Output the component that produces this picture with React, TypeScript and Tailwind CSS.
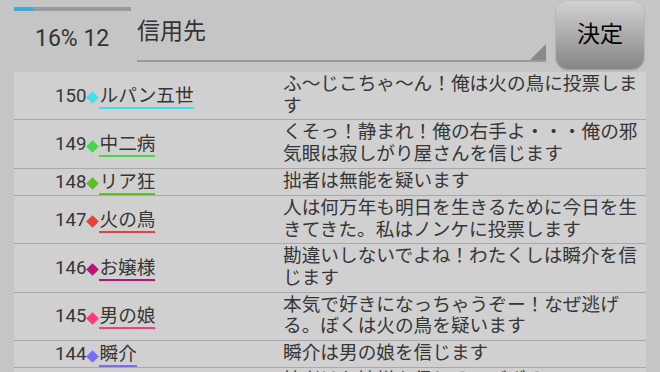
import React from 'react';

interface Post {
  no: number;
  name: string;
  color: string;
  text: string;
}

const posts: Post[] = [
  { no: 150, name: 'ルパン五世', color: '#3fe0ee', text: 'ふ〜じこちゃ〜ん！俺は火の鳥に投票します' },
  { no: 149, name: '中二病', color: '#47d84a', text: 'くそっ！静まれ！俺の右手よ・・・俺の邪気眼は寂しがり屋さんを信じます' },
  { no: 148, name: 'リア狂', color: '#5ec21e', text: '拙者は無能を疑います' },
  { no: 147, name: '火の鳥', color: '#e8413a', text: '人は何万年も明日を生きるために今日を生きてきた。私はノンケに投票します' },
  { no: 146, name: 'お嬢様', color: '#c0107a', text: '勘違いしないでよね！わたくしは瞬介を信じます' },
  { no: 145, name: '男の娘', color: '#ff3a7a', text: '本気で好きになっちゃうぞー！なぜ逃げる。ぼくは火の鳥を疑います' },
  { no: 144, name: '瞬介', color: '#7a6cf5', text: '瞬介は男の娘を信じます' },
  { no: 143, name: 'ノンケ', color: '#e0a020', text: '拙者はお嬢様を信じるでござる\n寂しがり屋さんを疑います' },
];

const Row: React.FC<{ post: Post }> = ({ post }) => (
  <div className="flex border-b border-[#a9a9a9]">
    <div className="w-[269px] flex items-center pl-[41px] text-[#363636]">
      <span className="leading-[22px]">{post.no}</span>
      <span
        className="mx-[2px] mt-[4px] w-[9px] h-[9px] rotate-45 shrink-0"
        style={{ backgroundColor: post.color }}
      />
      <span
        className="leading-[22px] mt-[2px] border-b-2"
        style={{ borderColor: post.color }}
      >
        {post.name}
      </span>
    </div>
    <div className="flex-1 pr-[3px] py-[2px] leading-[21.7px] text-[#363636] whitespace-pre-line">
      {post.text}
    </div>
  </div>
);

export default function App() {
  return (
    <div
      className="w-[660px] h-[372px] overflow-hidden bg-[#c5c5c5] text-[18.67px]"
      style={{ fontFamily: 'Roboto, "Noto Sans CJK JP", sans-serif' }}
    >
      <div className="flex h-[72px]">
        <div className="w-[137px] pl-[14px] pt-[7px]">
          <div className="w-[117px] h-[4px] bg-[#9a9a9a]">
            <div className="w-[19px] h-full bg-[#3fa9dc]" />
          </div>
          <div className="pl-[21px] mt-[14px] text-[23px] leading-[27px] text-[#333]">16% 12</div>
        </div>
        <div className="relative w-[409px] h-[62px] border-b-2 border-[#999]">
          <div className="pt-[17px] text-[23px] leading-[30px] text-[#333]">信用先</div>
          <div
            className="absolute right-0 bottom-0 w-[16px] h-[16px] bg-[#8a8a8a]"
            style={{ clipPath: 'polygon(100% 0, 100% 100%, 0 100%)' }}
          />
        </div>
        <div className="ml-[10px] mt-[1px] w-[88px] h-[68px] rounded-[12px] bg-gradient-to-b from-[#d2d2d2] to-[#868686] shadow-[0_1px_2px_rgba(0,0,0,0.25)] flex items-center justify-center text-[23px] text-black">
          決定
        </div>
      </div>
      <div className="ml-[14px] w-[632px] bg-[#d0d0d0]">
        {posts.map((p) => (
          <Row key={p.no} post={p} />
        ))}
      </div>
    </div>
  );
}
